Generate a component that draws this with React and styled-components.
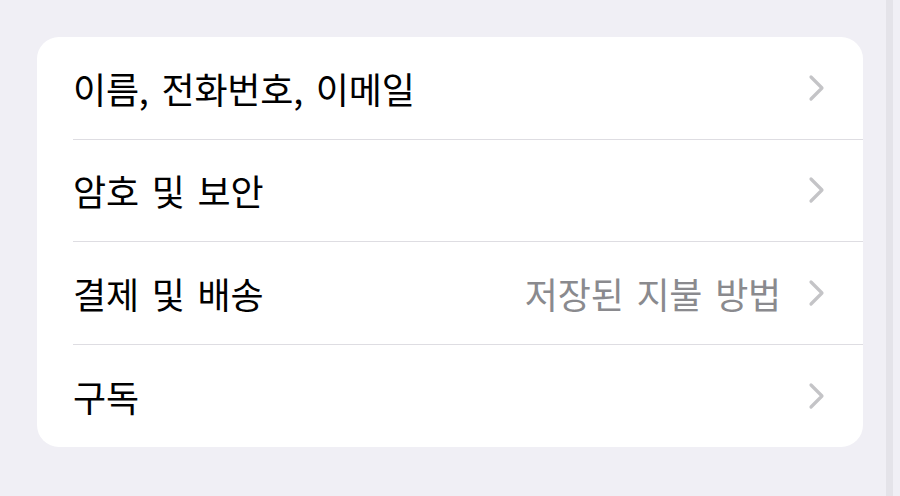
import React from "react";
import styled, { createGlobalStyle } from "styled-components";

const Global = createGlobalStyle`
  html, body { margin: 0; padding: 0; background: #f0eff5; }
  body { font-family: "Noto Sans CJK KR", "Noto Sans", sans-serif; }
`;

const Page = styled.div`
  display: flex;
  width: 900px;
  height: 496px;
  background: #f0eff5;
`;

const Main = styled.div`
  flex: 1;
  padding: 37px 23px 0 37px;
`;

const Strip = styled.div`
  width: 7px;
  background: #e4e3e9;
`;

const Gutter = styled.div`
  width: 7px;
`;

const Card = styled.div`
  background: #ffffff;
  border-radius: 22px;
  overflow: hidden;
`;

const Row = styled.div`
  padding-left: 36px;
`;

const RowInner = styled.div`
  height: 102.5px;
  box-sizing: border-box;
  display: flex;
  align-items: center;
  padding-right: 38px;
  border-bottom: ${(p) => (p.$last ? "none" : "1.5px solid #dedde2")};
`;

const Label = styled.span`
  flex: 1;
  font-size: 36px;
  color: #000;
  letter-spacing: -0.2px;
  word-spacing: 5px;
  white-space: nowrap;
`;

const Detail = styled.span`
  font-size: 36px;
  color: #8a8a8e;
  margin-right: 27px;
  letter-spacing: -0.2px;
  word-spacing: 5px;
  white-space: nowrap;
`;

const Chevron = () => (
  <svg width="17" height="28" viewBox="0 0 17 28">
    <path
      d="M3 3 L14 14 L3 25"
      fill="none"
      stroke="#c4c4c7"
      strokeWidth="3.2"
      strokeLinecap="round"
      strokeLinejoin="round"
    />
  </svg>
);

const items = [
  { label: "이름, 전화번호, 이메일" },
  { label: "암호 및 보안" },
  { label: "결제 및 배송", detail: "저장된 지불 방법" },
  { label: "구독" },
];

export default function App() {
  return (
    <Page>
      <Global />
      <Main>
        <Card>
          {items.map((it, i) => (
            <Row key={i}>
              <RowInner $last={i === items.length - 1}>
                <Label>{it.label}</Label>
                {it.detail && <Detail>{it.detail}</Detail>}
                <Chevron />
              </RowInner>
            </Row>
          ))}
        </Card>
      </Main>
      <Strip />
      <Gutter />
    </Page>
  );
}
